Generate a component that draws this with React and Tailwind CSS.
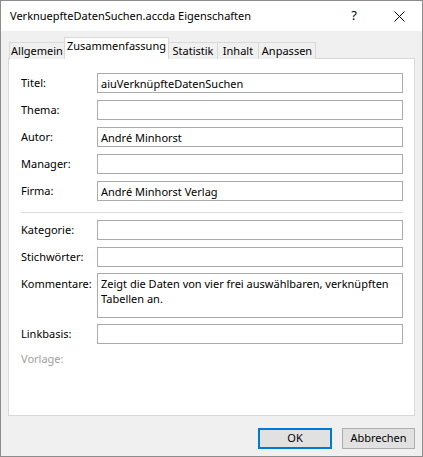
import React from 'react'

const font = { fontFamily: '"Noto Sans", "Open Sans", sans-serif' }

const tabs = [
  { label: 'Allgemein', w: 'w-[56px]' },
  { label: 'Zusammenfassung', w: 'w-[105px]', active: true },
  { label: 'Statistik', w: 'w-[50px]' },
  { label: 'Inhalt', w: 'w-[42px]' },
  { label: 'Anpassen', w: 'w-[58px]' },
]

const Field = ({ label, value, tall, className = '' }) => (
  <div className={`flex ${tall ? 'items-start' : 'items-center'} ${className}`}>
    <span className={`w-[76px] shrink-0 ${tall ? 'pt-[3px]' : ''}`}>{label}</span>
    <div
      className={`w-[306px] border border-[#ababab] bg-white px-[3px] leading-[15px] ${
        tall ? 'h-[45px] pt-[2px]' : 'h-[20px] flex items-center'
      }`}
    >
      {value}
    </div>
  </div>
)

export default function App() {
  return (
    <div
      className="w-[423px] h-[457px] border border-[#8c8c8c] bg-[#f0f0f0] flex flex-col text-[11px] text-black overflow-hidden"
      style={font}
    >
      {/* title bar */}
      <div className="h-[30px] bg-white flex items-center pl-[9px] shrink-0">
        <span className="flex-1 text-[11px]">VerknuepfteDatenSuchen.accda Eigenschaften</span>
        <span className="w-[44px] text-center text-[13px]">?</span>
        <div className="w-[46px] flex justify-center">
          <svg width="11" height="11" viewBox="0 0 11 11">
            <path d="M0.5 0.5 L10.5 10.5 M10.5 0.5 L0.5 10.5" stroke="#000" strokeWidth="1" />
          </svg>
        </div>
      </div>

      {/* tabs */}
      <div className="flex items-end h-[21px] mt-[7px] ml-[8px] relative z-10">
        {tabs.map((t, i) => (
          <div
            key={t.label}
            className={`${t.w} ${i > 0 ? '-ml-px' : ''} border-t border-l border-r border-[#d9d9d9] flex items-center justify-center ${
              t.active ? 'h-[22px] bg-white border-b-0 pb-[4px] relative z-10' : 'h-[17px] bg-[#f0f0f0]'
            }`}
          >
            {t.label}
          </div>
        ))}
      </div>

      {/* panel */}
      <div className="h-[358px] mx-[7px] -mt-px border border-[#d9d9d9] bg-white pl-[12px] pt-[14px] flex flex-col">
        <div className="flex flex-col gap-[7px]">
          <Field label="Titel:" value="aiuVerknüpfteDatenSuchen" />
          <Field label="Thema:" value="" />
          <Field label="Autor:" value="André Minhorst" />
          <Field label="Manager:" value="" />
          <Field label="Firma:" value="André Minhorst Verlag" />
        </div>
        <div className="h-px w-[382px] bg-[#dcdcdc] mt-[11px] mb-[7px]" />
        <div className="flex flex-col">
          <Field label="Kategorie:" value="" />
          <Field label="Stichwörter:" value="" className="mt-[7px]" />
          <Field
            label="Kommentare:"
            value="Zeigt die Daten von vier frei auswählbaren, verknüpften Tabellen an."
            tall
            className="mt-[6px]"
          />
          <Field label="Linkbasis:" value="" className="mt-[6px]" />
          <span className="text-[#a0a0a0] h-[14px] flex items-center mt-[8px]">Vorlage:</span>
        </div>
      </div>

      {/* buttons */}
      <div className="flex justify-end gap-[10px] mt-[12px] mr-[7px]">
        <button className="w-[74px] h-[21px] bg-[#e1e1e1] border-2 border-[#0078d7] flex items-center justify-center">
          OK
        </button>
        <button className="w-[73px] h-[21px] bg-[#e1e1e1] border border-[#adadad] flex items-center justify-center">
          Abbrechen
        </button>
      </div>
    </div>
  )
}
